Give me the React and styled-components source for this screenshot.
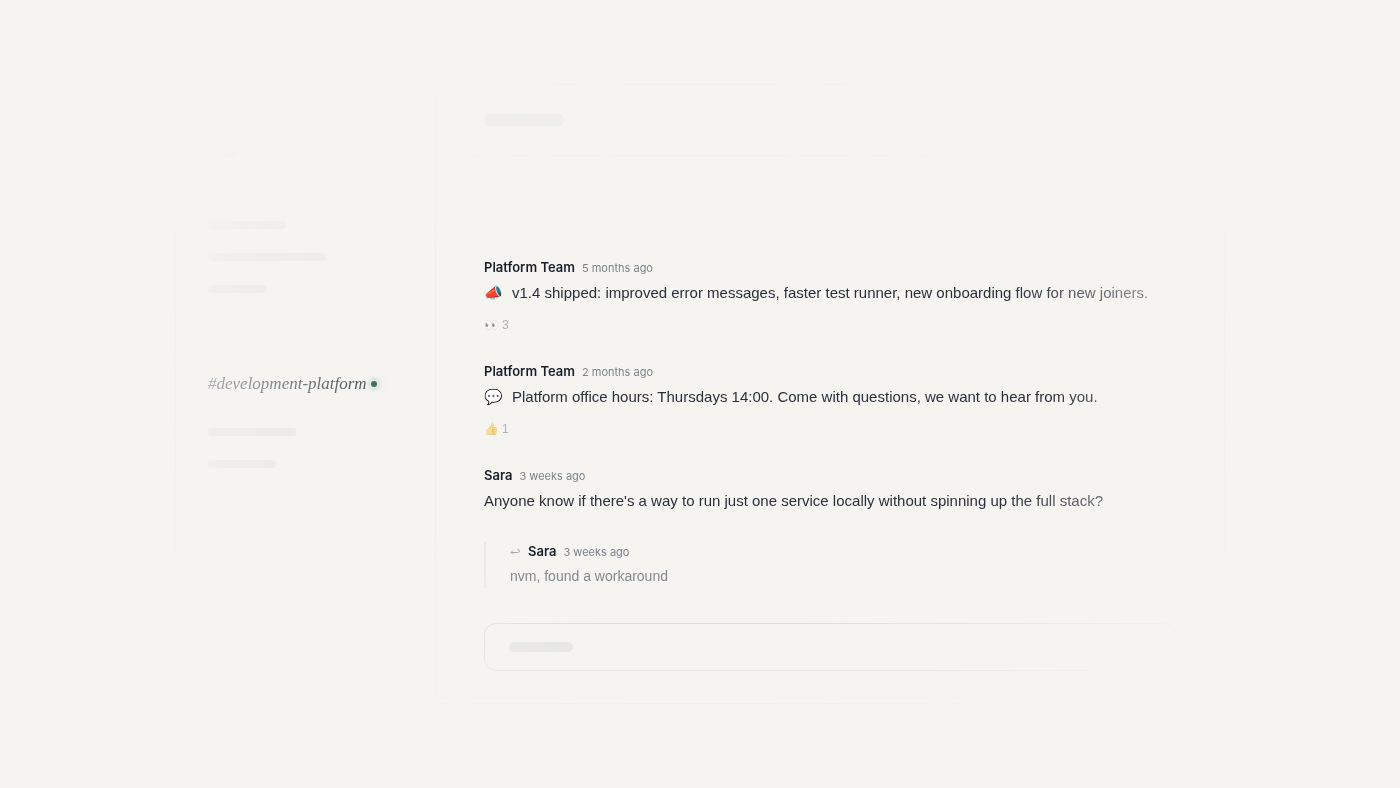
import React from "react";
import styled, { createGlobalStyle } from "styled-components";

const GlobalStyle = createGlobalStyle`
  * { box-sizing: border-box; }
  body {
    margin: 0;
    background: #f5f4f0;
    color: #1a1f2b;
    font-family: Inter, "Liberation Sans", sans-serif;
  }
  h2, p { margin: 0; padding: 0; font: inherit; }
`;

const Page = styled.div`
  min-height: 100vh;
  display: flex;
  align-items: center;
  justify-content: center;
`;

const Window = styled.div`
  width: 75%;
  min-height: 620px;
  display: flex;
  border: 1px solid #ecece9;
  border-radius: 16px;
  mask-image: radial-gradient(ellipse 59% 63% at 50% 50%, #000 56%, transparent 100%);
`;

const Sidebar = styled.nav`
  width: 260px;
  flex: none;
  display: flex;
  flex-direction: column;
  padding: 40px 32px;
  border-right: 1px solid #f0efec;
`;

const Avatar = styled.div`
  width: 32px;
  height: 32px;
  border-radius: 8px;
  background: #dcdddb;
`;

const ChannelList = styled.div`
  display: flex;
  flex-direction: column;
  gap: 24px;
  margin-top: ${(p) => p.$top}px;
`;

const Bar = styled.div`
  width: ${(p) => p.$width};
  height: ${(p) => p.$height || 8}px;
  border-radius: 6px;
  background: ${(p) => p.$color || "#e8e8e5"};
`;

const Channel = styled.a`
  display: flex;
  align-items: center;
  gap: 4px;
  margin-top: 79px;
  color: #565c66;
  font-family: "Liberation Serif", serif;
  font-size: 17px;
  font-style: italic;
  line-height: 24px;
  text-decoration: none;
`;

const Dot = styled.span`
  width: 6px;
  height: 6px;
  flex: none;
  border-radius: 50%;
  background: #3f755f;
  box-shadow: 0 0 0 4px #5a8f7b14, 0 0 12px #5a8f7b48;
`;

const Main = styled.main`
  flex: 1;
  min-width: 0;
  display: flex;
  flex-direction: column;
`;

const Header = styled.header`
  height: 71px;
  display: flex;
  align-items: center;
  padding: 0 48px;
  border-bottom: 1px solid #f0efec;
`;

const Feed = styled.div`
  flex: 1;
  display: flex;
  flex-direction: column;
  justify-content: flex-end;
  gap: 28px;
  padding: 0 48px 35px;
`;

const Message = styled.article`
  display: flex;
  flex-direction: column;
  gap: 4px;
`;

const Reply = styled(Message)`
  padding-left: 24px;
  border-left: 2px solid #e9eae7;
`;

const Byline = styled.div`
  height: 18px;
  display: flex;
  align-items: baseline;
  gap: 7px;
  line-height: 18px;
`;

const Author = styled.h2`
  font-size: 13px;
  font-weight: 600;
`;

const Time = styled.time`
  color: #7d828a;
  font-size: 11px;
`;

const Arrow = styled.svg`
  width: 10px;
  height: 8px;
  margin-right: 1px;
  fill: none;
  stroke: #a5a9ad;
`;

const Body = styled.p`
  display: flex;
  gap: 9px;
  color: #2a303b;
  font-family: "Liberation Sans", Arial, sans-serif;
  font-size: 15px;
  line-height: 26px;
`;

const ReplyBody = styled.p`
  color: #858a90;
  font-family: "Liberation Sans", Arial, sans-serif;
  font-size: 14px;
  line-height: 24px;
`;

const Reaction = styled.button`
  align-self: flex-start;
  display: flex;
  gap: 3px;
  margin-top: 6px;
  padding: 0;
  border: 0;
  background: none;
  color: #6b727c;
  font: 12px/18px "Liberation Sans", sans-serif;
  opacity: 0.5;
`;

const Composer = styled.div`
  height: 48px;
  display: flex;
  align-items: center;
  margin: 0 48px 32px;
  padding: 0 24px;
  border: 1px solid #d9dbd8;
  border-radius: 12px;
`;

const messages = [
  { author: "Platform Team", time: "5 months ago", icon: "📣", text: "v1.4 shipped: improved error messages, faster test runner, new onboarding flow for new joiners.", emoji: "👀", count: 3 },
  { author: "Platform Team", time: "2 months ago", icon: "💬", text: "Platform office hours: Thursdays 14:00. Come with questions, we want to hear from you.", emoji: "👍", count: 1 },
  { author: "Sara", time: "3 weeks ago", text: "Anyone know if there's a way to run just one service locally without spinning up the full stack?" },
];

export default function App() {
  return (
    <Page>
      <GlobalStyle />
      <Window>
        <Sidebar>
          <Avatar />
          <ChannelList $top={64}>
            <Bar $width="40%" />
            <Bar $width="60%" />
            <Bar $width="30%" />
          </ChannelList>
          <Channel href="#development-platform">
            <span>#development-platform</span>
            <Dot />
          </Channel>
          <ChannelList $top={32}>
            <Bar $width="45%" />
            <Bar $width="35%" />
          </ChannelList>
        </Sidebar>
        <Main>
          <Header>
            <Bar $width="80px" $height={12} />
          </Header>
          <Feed>
            {messages.map((m) => (
              <Message key={m.text}>
                <Byline>
                  <Author>{m.author}</Author>
                  <Time>{m.time}</Time>
                </Byline>
                <Body>
                  {m.icon && <span>{m.icon}</span>}
                  <span>{m.text}</span>
                </Body>
                {m.emoji && (
                  <Reaction type="button">
                    <span>{m.emoji}</span>
                    <span>{m.count}</span>
                  </Reaction>
                )}
              </Message>
            ))}
            <Reply>
              <Byline>
                <Arrow viewBox="0 0 10 8">
                  <path d="M3 2.5 L1 4.5 L3 6.5 M1 4.5 H7.5 Q9.5 4.5 9.5 2.8 Q9.5 1.5 7.5 1.5" />
                </Arrow>
                <Author>Sara</Author>
                <Time>3 weeks ago</Time>
              </Byline>
              <ReplyBody>nvm, found a workaround</ReplyBody>
            </Reply>
          </Feed>
          <Composer>
            <Bar $width="64px" $height={10} $color="#e1e3e0" />
          </Composer>
        </Main>
      </Window>
    </Page>
  );
}
